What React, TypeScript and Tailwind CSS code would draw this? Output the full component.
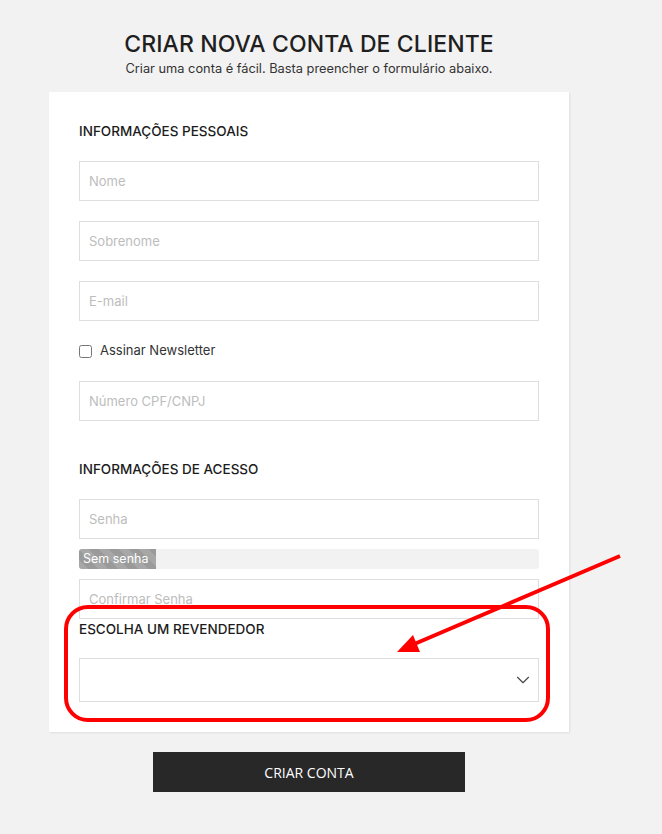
import { ChevronDown } from "lucide-react";

const inputCls =
  "block h-10 w-full border border-[#dedede] bg-white px-[9px] text-[13px] text-[#333] placeholder:text-[#bdbdbd] outline-none";

function SectionTitle({ children, className = "" }: { children: string; className?: string }) {
  return (
    <h3 className={`h-5 text-[13.5px] font-medium leading-5 text-[#1c1c1c] ${className}`}>
      {children}
    </h3>
  );
}

function Annotation() {
  return (
    <svg
      className="pointer-events-none absolute left-0 top-0"
      width="662"
      height="834"
      viewBox="0 0 662 834"
    >
      <rect
        x="66"
        y="607"
        width="482"
        height="113"
        rx="22"
        fill="none"
        stroke="#ff0000"
        strokeWidth="4"
      />
      <line x1="620" y1="556" x2="412" y2="645" stroke="#ff0000" strokeWidth="4" />
      <polygon points="397,652 413,635 420,652" fill="#ff0000" />
    </svg>
  );
}

export default function App() {
  return (
    <div
      className="relative min-h-[834px] w-full bg-[#f2f2f2]"
      style={{ fontFamily: "Inter, 'Noto Sans', sans-serif" }}
    >
      <div className="ml-[49px] w-[520px] pt-[29px]">
        <h1 className="text-center text-[23px] font-medium leading-[30px] tracking-[0.1px] text-[#1f1f1f]">
          CRIAR NOVA CONTA DE CLIENTE
        </h1>
        <p className="mt-[2px] text-center text-[12.8px] leading-4 text-[#333]">
          Criar uma conta é fácil. Basta preencher o formulário abaixo.
        </p>

        <form className="mt-[15px] bg-white px-[30px] pb-[30px] pt-[29px] shadow-[1px_1px_2px_rgba(0,0,0,0.08)]">
          <SectionTitle>INFORMAÇÕES PESSOAIS</SectionTitle>
          <input className={`${inputCls} mt-5`} placeholder="Nome" />
          <input className={`${inputCls} mt-5`} placeholder="Sobrenome" />
          <input className={`${inputCls} mt-5`} placeholder="E-mail" />

          <label className="mt-5 flex h-5 items-center gap-2 text-[13px] text-[#333]">
            <input type="checkbox" className="h-[13px] w-[13px]" />
            Assinar Newsletter
          </label>

          <input className={`${inputCls} mt-5`} placeholder="Número CPF/CNPJ" />

          <SectionTitle className="mt-[38px]">INFORMAÇÕES DE ACESSO</SectionTitle>
          <input type="password" className={`${inputCls} mt-5`} placeholder="Senha" />

          <div className="mt-[10px] h-5 overflow-hidden rounded-[3px] bg-[#f2f2f2]">
            <div className="flex h-full w-[77px] items-center bg-[#9a9a9a] bg-[repeating-linear-gradient(45deg,rgba(255,255,255,0.13)_0px,rgba(255,255,255,0.13)_7px,transparent_7px,transparent_14px)] pl-1 text-[12.5px] leading-5 text-white">
              Sem senha
            </div>
          </div>

          <input
            type="password"
            className={`${inputCls} mt-[10px]`}
            placeholder="Confirmar Senha"
          />

          <SectionTitle>ESCOLHA UM REVENDEDOR</SectionTitle>
          <div className="relative mt-[19px]">
            <select className="block h-11 w-full appearance-none border border-[#dedede] bg-white px-[9px] text-[13px] text-[#333] outline-none">
              <option value=""></option>
            </select>
            <ChevronDown
              className="pointer-events-none absolute right-[5px] top-[11px] h-[22px] w-[22px] text-[#444]"
              strokeWidth={1.2}
            />
          </div>
        </form>

        <button
          type="button"
          className="mx-auto mt-5 block h-10 w-[312px] bg-[#282828] text-[14px] font-medium text-white"
          style={{ fontFamily: "'Open Sans', sans-serif" }}
        >
          CRIAR CONTA
        </button>
      </div>

      <Annotation />
    </div>
  );
}
